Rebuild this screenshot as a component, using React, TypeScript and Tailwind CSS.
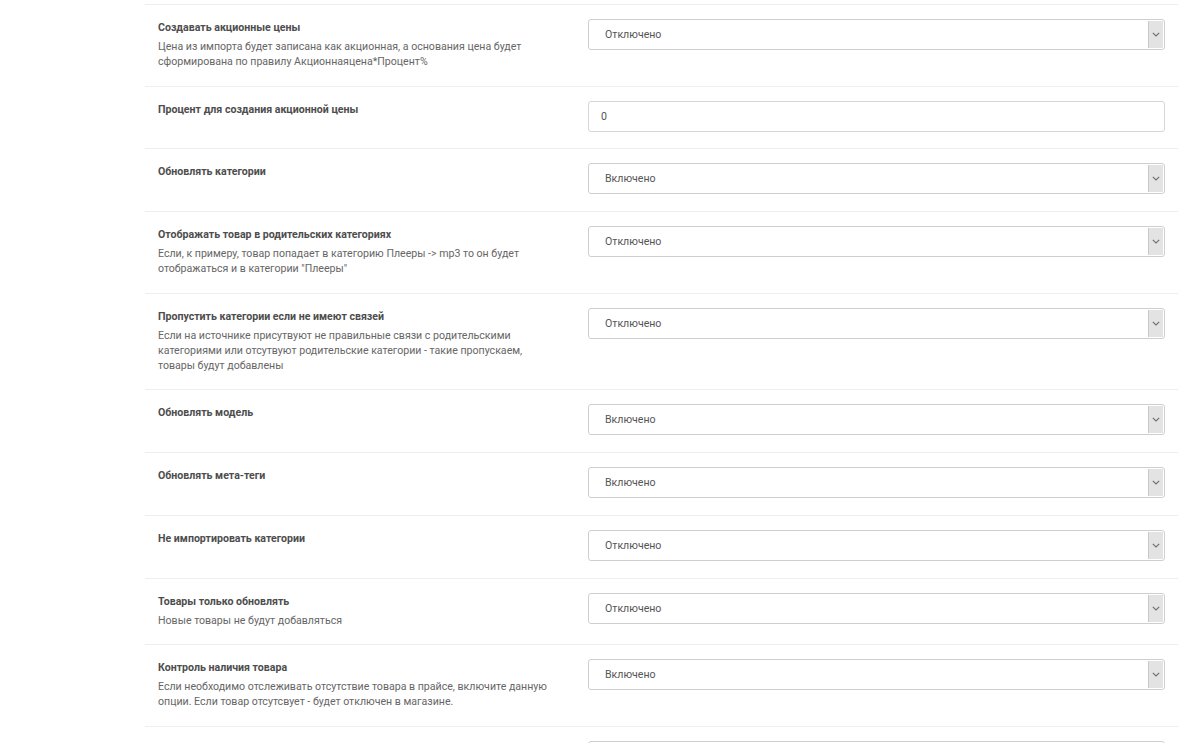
import React from "react";

type Row = { title: string; desc?: string[]; value: string; kind?: "select" | "input" };

const rows: Row[] = [
  {
    title: "Создавать акционные цены",
    desc: [
      "Цена из импорта будет записана как акционная, а основания цена будет",
      "сформирована по правилу Акционнаяцена*Процент%",
    ],
    value: "Отключено",
  },
  { title: "Процент для создания акционной цены", value: "0", kind: "input" },
  { title: "Обновлять категории", value: "Включено" },
  {
    title: "Отображать товар в родительских категориях",
    desc: [
      "Если, к примеру, товар попадает в категорию Плееры -> mp3 то он будет",
      "отображаться и в категории \"Плееры\"",
    ],
    value: "Отключено",
  },
  {
    title: "Пропустить категории если не имеют связей",
    desc: [
      "Если на источнике присутвуют не правильные связи с родительскими",
      "категориями или отсутвуют родительские категории - такие пропускаем,",
      "товары будут добавлены",
    ],
    value: "Отключено",
  },
  { title: "Обновлять модель", value: "Включено" },
  { title: "Обновлять мета-теги", value: "Включено" },
  { title: "Не импортировать категории", value: "Отключено" },
  { title: "Товары только обновлять", desc: ["Новые товары не будут добавляться"], value: "Отключено" },
  {
    title: "Контроль наличия товара",
    desc: [
      "Если необходимо отслеживать отсутствие товара в прайсе, включите данную",
      "опции. Если товар отсутсвует - будет отключен в магазине.",
    ],
    value: "Включено",
  },
  { title: "", value: "Включено" },
];

function Select({ value }: { value: string }) {
  return (
    <div className="flex h-[31px] items-stretch rounded-[3px] border border-[#cfcfcf] bg-white">
      <div className="flex flex-1 items-center pl-[16px] pt-[1px] text-[10.6px] text-[#555]">{value}</div>
      <div className="my-[1px] mr-[1px] flex w-[15px] items-center justify-center border-l border-[#c8c8c8] bg-[#e3e3e3]">
        <svg width="8" height="5" viewBox="0 0 8 5" fill="none">
          <path d="M0.8 0.8 L4 4 L7.2 0.8" stroke="#6e6e6e" strokeWidth="1.1" />
        </svg>
      </div>
    </div>
  );
}

function Input({ value }: { value: string }) {
  return (
    <div className="flex h-[31px] items-center rounded-[3px] border border-[#d6d6d6] bg-white pl-[12px] pt-[1px] text-[10.6px] text-[#555]">
      {value}
    </div>
  );
}

export default function App() {
  return (
    <div className="h-[743px] overflow-hidden bg-white" style={{ fontFamily: "Roboto, 'Liberation Sans', sans-serif" }}>
      <div className="h-[4px]" />
      <div className="ml-[145px] w-[1033px]">
        {rows.map((r, i) => (
          <div key={i} className="flex border-t border-[#eeeeee] pt-[14px] pb-[16.7px]">
            <div className="w-[430px] shrink-0 px-[13px]">
              {r.title && (
                <div className="mb-[3px] text-[10.6px] font-bold leading-[17px] text-[#4d4d4d]">
                  {r.title}
                </div>
              )}
              {r.desc &&
                r.desc.map((d, j) => (
                  <div key={j} className="text-[10.6px] leading-[15px] text-[#666]">
                    {d}
                  </div>
                ))}
            </div>
            <div className="flex-1 px-[13px]">
              {r.kind === "input" ? <Input value={r.value} /> : <Select value={r.value} />}
            </div>
          </div>
        ))}
      </div>
    </div>
  );
}
